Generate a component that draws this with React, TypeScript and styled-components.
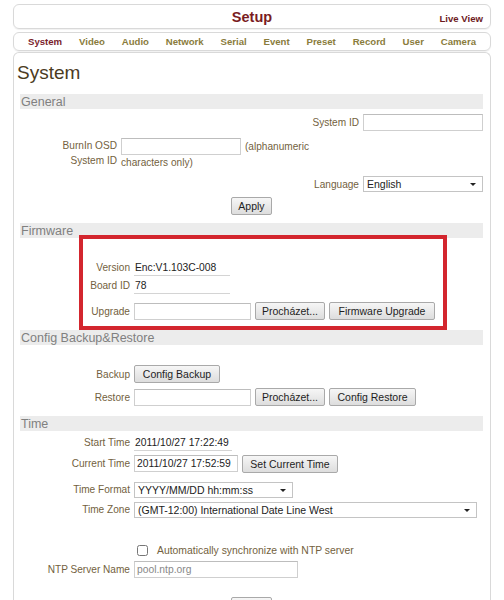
import React from 'react';
import styled, { createGlobalStyle } from 'styled-components';

const GlobalStyle = createGlobalStyle`
  html, body {
    margin: 0;
    padding: 0;
    background: #ffffff;
    font-family: 'Liberation Sans', Arial, sans-serif;
  }
`;

const Page = styled.div`
  width: 478px;
  margin: 0 0 0 13px;
  padding-top: 4px;
`;

const HeaderBar = styled.div`
  height: 23px;
  border: 1px solid #d9d9d9;
  border-radius: 6px;
  box-shadow: 0 1px 1px rgba(0, 0, 0, 0.06);
  display: grid;
  grid-template-columns: 1fr auto 1fr;
  align-items: center;
  padding: 0 7px;
`;

const SetupTitle = styled.div`
  grid-column: 2;
  font-size: 14.5px;
  font-weight: bold;
  color: #7a1c1f;
`;

const LiveView = styled.a`
  justify-self: end;
  font-size: 9.6px;
  font-weight: bold;
  color: #6e1a1d;
  text-decoration: none;
  margin-top: 4px;
`;

const NavBar = styled.div`
  margin-top: 3px;
  height: 17px;
  border: 1px solid #d9d9d9;
  border-radius: 6px;
  box-shadow: 0 1px 1px rgba(0, 0, 0, 0.06);
  display: flex;
  justify-content: space-between;
  align-items: center;
  padding: 0 14px;
`;

const NavItem = styled.a<{ $active?: boolean }>`
  font-size: 9.6px;
  font-weight: bold;
  color: ${p => (p.$active ? '#7a1e2c' : '#8a7c3c')};
  text-decoration: none;
`;

const MainPanel = styled.div`
  margin-top: 1px;
  border: 1px solid #d9d9d9;
  border-bottom: none;
  border-radius: 6px 6px 0 0;
  padding: 9px 7px 20px 6px;
  min-height: 560px;
  box-sizing: border-box;
`;

const PageTitle = styled.h1`
  margin: 0 0 0 -3px;
  font-size: 19px;
  line-height: 22px;
  font-weight: normal;
  color: #4b3b1e;
`;

const Section = styled.div<{ $mt?: number }>`
  position: relative;
  margin-top: ${p => p.$mt ?? 0}px;
`;

const SectionBar = styled.div`
  height: 15px;
  line-height: 16px;
  background: #ececec;
  color: #808080;
  font-size: 12.5px;
  padding-left: 1px;
`;

const Highlight = styled.div`
  position: absolute;
  top: 12px;
  left: 59px;
  width: 368px;
  height: 95px;
  box-sizing: border-box;
  border: 4px solid #d3262e;
  pointer-events: none;
`;

const Row = styled.div<{ $h?: number; $mt?: number; $end?: boolean; $top?: boolean }>`
  display: flex;
  align-items: ${p => (p.$top ? 'flex-start' : 'center')};
  justify-content: ${p => (p.$end ? 'flex-end' : 'flex-start')};
  gap: 4px;
  height: ${p => p.$h ?? 18}px;
  margin-top: ${p => p.$mt ?? 0}px;
`;

const Label = styled.span<{ $w?: number }>`
  width: ${p => (p.$w !== undefined ? `${p.$w}px` : 'auto')};
  flex-shrink: 0;
  text-align: right;
  font-size: 10.1px;
  line-height: 15px;
  color: #735f40;
  white-space: nowrap;
`;

const Field = styled.div`
  display: flex;
  align-items: center;
  gap: 4px;
`;

const Value = styled.span<{ $w: number }>`
  width: ${p => p.$w}px;
  box-sizing: border-box;
  font-size: 10.3px;
  color: #222;
  line-height: 15px;
  padding-left: 1px;
  border-bottom: 1px solid #d4d4d4;
  margin-top: 2px;
  white-space: nowrap;
`;

const TextInput = styled.input<{ $w: number }>`
  width: ${p => p.$w}px;
  height: 17px;
  box-sizing: border-box;
  border: 1px solid #cfcfcf;
  border-top-color: #bdbdbd;
  padding: 0 2px;
  font-family: inherit;
  font-size: 10.3px;
  color: #222;
  background: #fff;
  outline: none;
  &::placeholder {
    color: #888;
  }
`;

const Button = styled.button<{ $w?: number }>`
  width: ${p => (p.$w ? `${p.$w}px` : 'auto')};
  height: 18px;
  box-sizing: border-box;
  padding: 0 6px;
  border: 1px solid #a9a9a9;
  border-radius: 2px;
  background: linear-gradient(#f6f6f6, #dddddd);
  font-family: inherit;
  font-size: 10.5px;
  color: #1e1e1e;
  white-space: nowrap;
`;

/* drop-down look: value text plus a small triangle */
const SelectBox = styled.div<{ $w: number }>`
  position: relative;
  width: ${p => p.$w}px;
  height: 16px;
  box-sizing: border-box;
  border: 1px solid #c4c4c4;
  background: #fff;
  padding: 0 14px 0 3px;
  font-size: 10.5px;
  line-height: 14px;
  color: #222;
  white-space: nowrap;
  overflow: hidden;
  &::after {
    content: '';
    position: absolute;
    right: 6px;
    top: 6px;
    border-left: 3px solid transparent;
    border-right: 3px solid transparent;
    border-top: 3px solid #222;
  }
`;

const HelpText = styled.span`
  font-size: 10.1px;
  color: #735f40;
  line-height: 15px;
`;

const Stack = styled.div`
  display: flex;
  flex-direction: column;
`;

const Checkbox = styled.input`
  width: 11px;
  height: 11px;
  margin: 0 3px 0 3px;
`;

const CheckText = styled.span`
  font-size: 10.4px;
  color: #735f40;
  margin-left: 2px;
`;

const Centered = styled.div<{ $mt?: number }>`
  display: flex;
  justify-content: center;
  margin-top: ${p => p.$mt ?? 0}px;
`;

const navItems = ['System', 'Video', 'Audio', 'Network', 'Serial', 'Event', 'Preset', 'Record', 'User', 'Camera'];

const LW = 110;

const App = () => {
  return (
    <>
      <GlobalStyle />
      <Page>
        <HeaderBar>
          <SetupTitle>Setup</SetupTitle>
          <LiveView href="#">Live View</LiveView>
        </HeaderBar>
        <NavBar>
          {navItems.map(item => (
            <NavItem key={item} href="#" $active={item === 'System'}>
              {item}
            </NavItem>
          ))}
        </NavBar>

        <MainPanel>
          <PageTitle>System</PageTitle>

          {/* General */}
          <Section $mt={10}>
            <SectionBar>General</SectionBar>
            <Row $mt={4} $h={19} $end>
              <Label>System ID</Label>
              <TextInput $w={120} />
            </Row>
            <Row $mt={6} $h={31} $top>
              <Label $w={97}>
                BurnIn OSD
                <br />
                System ID
              </Label>
              <Stack>
                <Field>
                  <TextInput $w={120} />
                  <HelpText>(alphanumeric</HelpText>
                </Field>
                <HelpText>characters only)</HelpText>
              </Stack>
            </Row>
            <Row $mt={6} $h={18} $end>
              <Label>Language</Label>
              <SelectBox $w={120}>English</SelectBox>
            </Row>
            <Centered $mt={4}>
              <Button>Apply</Button>
            </Centered>
          </Section>

          {/* Firmware */}
          <Section $mt={8}>
            <SectionBar>Firmware</SectionBar>
            <Row $h={20} />
            <Row>
              <Label $w={LW}>Version</Label>
              <Value $w={96}>Enc:V1.103C-008</Value>
            </Row>
            <Row>
              <Label $w={LW}>Board ID</Label>
              <Value $w={96}>78</Value>
            </Row>
            <Row $mt={6} $h={22}>
              <Label $w={LW}>Upgrade</Label>
              <Field>
                <TextInput $w={117} />
                <Button $w={70}>Procházet...</Button>
                <Button $w={106}>Firmware Upgrade</Button>
              </Field>
            </Row>
            <Highlight />
          </Section>

          {/* Config Backup&Restore */}
          <Section $mt={8}>
            <SectionBar>Config Backup&amp;Restore</SectionBar>
            <Row $h={20} />
            <Row>
              <Label $w={LW}>Backup</Label>
              <Button $w={86}>Config Backup</Button>
            </Row>
            <Row $mt={3} $h={22}>
              <Label $w={LW}>Restore</Label>
              <Field>
                <TextInput $w={117} />
                <Button $w={70}>Procházet...</Button>
                <Button $w={87}>Config Restore</Button>
              </Field>
            </Row>
          </Section>

          {/* Time */}
          <Section $mt={8}>
            <SectionBar>Time</SectionBar>
            <Row $mt={2}>
              <Label $w={LW}>Start Time</Label>
              <Value $w={98}>2011/10/27 17:22:49</Value>
            </Row>
            <Row $mt={2} $h={21}>
              <Label $w={LW}>Current Time</Label>
              <Field>
                <TextInput $w={104} defaultValue="2011/10/27 17:52:59" />
                <Button $w={96}>Set Current Time</Button>
              </Field>
            </Row>
            <Row $mt={6} $h={19}>
              <Label $w={LW}>Time Format</Label>
              <SelectBox $w={159}>YYYY/MM/DD hh:mm:ss</SelectBox>
            </Row>
            <Row $mt={1} $h={19}>
              <Label $w={LW}>Time Zone</Label>
              <SelectBox $w={343}>(GMT-12:00) International Date Line West</SelectBox>
            </Row>
            <Row $mt={22}>
              <Label $w={LW} />
              <Field>
                <Checkbox type="checkbox" />
                <CheckText>Automatically synchronize with NTP server</CheckText>
              </Field>
            </Row>
            <Row $mt={1}>
              <Label $w={LW}>NTP Server Name</Label>
              <TextInput $w={164} placeholder="pool.ntp.org" />
            </Row>
            <Centered $mt={19}>
              <Button>Apply</Button>
            </Centered>
          </Section>
        </MainPanel>
      </Page>
    </>
  );
};

export default App;
